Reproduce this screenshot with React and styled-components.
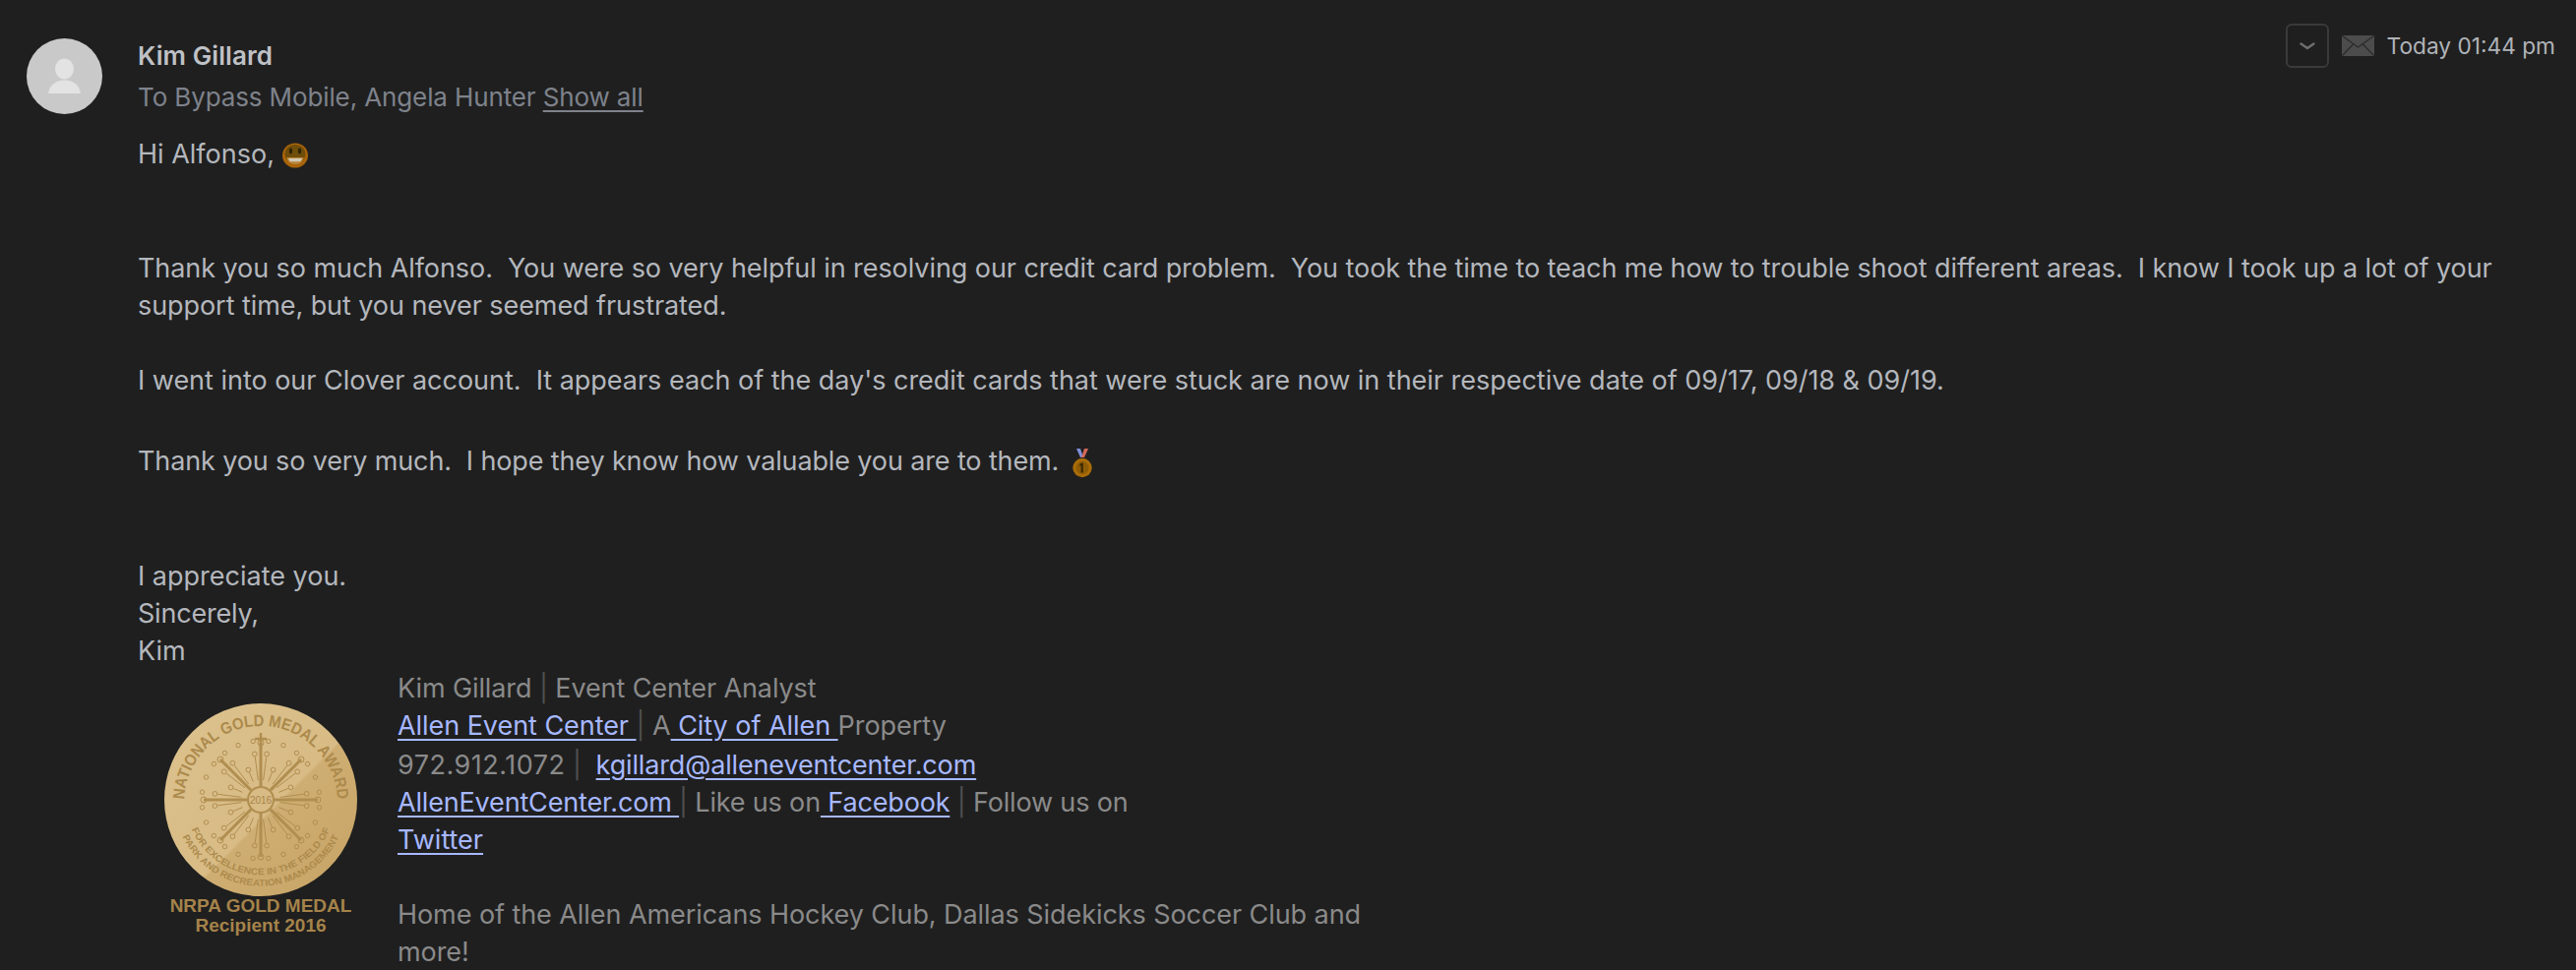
import styled, { createGlobalStyle } from "styled-components";

const GlobalStyle = createGlobalStyle`
  html, body {
    margin: 0;
    padding: 0;
    background: #1f1f1f;
  }
`;

const Page = styled.div`
  width: 2618px;
  height: 986px;
  overflow: hidden;
  display: flex;
  background: #1f1f1f;
  font-family: "Inter", "Liberation Sans", sans-serif;
  font-size: 27px;
  line-height: 38px;
  color: #b4b7bd;
`;

const Gutter = styled.div`
  flex: 0 0 140px;
  padding: 39px 0 0 27px;
  box-sizing: border-box;
`;

const Avatar = styled.div`
  width: 77px;
  height: 77px;
  border-radius: 50%;
  overflow: hidden;
  background: #c9c9c9;
  svg {
    display: block;
  }
`;

const Message = styled.div`
  flex: 1;
  min-width: 0;
  padding-right: 21px;
`;

const Header = styled.div`
  display: flex;
  justify-content: space-between;
  align-items: flex-start;
  height: 138px;
  padding-top: 38px;
  box-sizing: border-box;
`;

const Sender = styled.div`
  font-size: 26px;
  letter-spacing: 0.1px;
  font-weight: 600;
  color: #bfc1c6;
`;

const Recipients = styled.div`
  margin-top: 4px;
  font-size: 26px;
  letter-spacing: -0.12px;
  color: #7e828b;
  a {
    color: inherit;
    text-decoration: underline;
    text-underline-offset: 4px;
  }
`;

const Meta = styled.div`
  display: flex;
  align-items: center;
  margin-top: -14px;
  gap: 13px;
`;

const ToggleButton = styled.div`
  width: 44px;
  height: 45px;
  box-sizing: border-box;
  border: 2px solid #3a3a3a;
  border-radius: 6px;
  display: flex;
  align-items: center;
  justify-content: center;
`;

const Time = styled.span`
  font-size: 22.7px;
  color: #b0b3b8;
`;

const Line = styled.div`
  min-height: 38px;
  margin-top: ${(p) => p.$gap || 0}px;
  letter-spacing: ${(p) => p.$track || 0}px;
  svg {
    vertical-align: middle;
  }
`;

const Signature = styled.div`
  display: flex;
`;

const MedalCell = styled.div`
  flex: 0 0 264px;
  padding: 34px 0 0 25px;
  box-sizing: border-box;
  svg {
    display: block;
  }
`;

const SignatureText = styled.div`
  width: 1000px;
  color: #8a8a8a;
  a {
    color: #a7b8ff;
    text-decoration: underline;
    text-underline-offset: 4px;
  }
`;

const Separator = styled.span`
  color: #4e4e4e;
`;

const Phone = styled.span`
  letter-spacing: 0.5px;
`;

const GrinEmoji = () => (
  <svg width="26" height="26" viewBox="0 0 26 26" style={{ margin: "0 0 2px 0" }}>
    <ellipse cx="13" cy="13" rx="13" ry="12.6" fill="#a8640a" />
    <ellipse cx="13" cy="11.5" rx="10.5" ry="9.5" fill="#6f4e0a" />
    <ellipse cx="8.5" cy="8.500" rx="1.600" ry="3" fill="#2e2205" />
    <ellipse cx="17.500" cy="8.500" rx="1.600" ry="3" fill="#2e2205" />
    <path d="M4.500 15h17c-.6 4.500-4 7-8.500 7s-7.900-2.500-8.500-7z" fill="#b8853a" />
    <path d="M6 16h14c-.5 1.400-1 2.400-1.800 3.200H7.800C7 18.400 6.500 17.400 6 16z" fill="#d0c8b4" />
  </svg>
);

const MedalEmoji = () => (
  <svg width="20" height="30" viewBox="0 0 20 30" style={{ marginLeft: "6px" }}>
    <path d="M4 0h4l3 9H8z" fill="#7f8fd8" />
    <path d="M16 0h-4l-3 9h3z" fill="#d4685a" />
    <circle cx="10" cy="19.500" r="9.700" fill="#a86c08" />
    <circle cx="10" cy="19.500" r="6.500" fill="#8f5c06" />
    <path d="M10.800 14.500v10H8.600v-7.400l-1.400.8v-2l2-1.400z" fill="#3b2a05" />
  </svg>
);

const ChevronIcon = () => (
  <svg width="16" height="8" viewBox="0 0 16 8">
    <path d="M1.500 1.500 8 6l6.500-4.500" fill="none" stroke="#6e6e6e" strokeWidth="2.400" strokeLinecap="round" strokeLinejoin="round" />
  </svg>
);

const EnvelopeIcon = () => (
  <svg width="33" height="21" viewBox="0 0 33 21">
    <rect width="33" height="21" rx="1" fill="#4c4c4c" />
    <path d="M0.500 0.500 16.500 12 32.500 0.500M0.500 20.500 12 8.500M32.500 20.500 21 8.500" fill="none" stroke="#2a2a2a" strokeWidth="1.200" />
  </svg>
);

const PersonIcon = () => (
  <svg width="77" height="77" viewBox="0 0 77 77">
    <ellipse cx="38.500" cy="31" rx="9.500" ry="10.500" fill="#e3e3e3" />
    <path d="M22 56c1.500-9 8-13.500 16.500-13.500S53.500 47 55 56z" fill="#e3e3e3" />
  </svg>
);

const polar = (deg, r) => {
  const a = (deg * Math.PI) / 180;
  return { x: 100 + Math.cos(a) * r, y: 98 + Math.sin(a) * r };
};

// eight long spokes, with thin rays ending in small rings between them
const spokes = Array.from({ length: 8 }, (_, i) => {
  const deg = i * 45;
  return { from: polar(deg, 14), to: polar(deg, 58) };
});

const thinRays = Array.from({ length: 24 }, (_, i) => {
  const deg = i * 15 + 7.5;
  const len = i % 3 === 1 ? 30 : 44;
  return { from: polar(deg, 20), to: polar(deg, len), ring: polar(deg, len + 3) };
});

const outerRings = Array.from({ length: 24 }, (_, i) => polar(i * 15 + 7.5, 60));

const GoldMedal = () => (
  <svg width="200" height="240" viewBox="0 0 200 240">
    <defs>
      <linearGradient id="gold" x1="0" y1="0" x2="1" y2="1">
        <stop offset="0" stopColor="#dcc28e" />
        <stop offset="0.55" stopColor="#d8bb85" />
        <stop offset="0.56" stopColor="#cfae73" />
        <stop offset="1" stopColor="#c6a263" />
      </linearGradient>
      <path id="topArc" d="M22 101a78 78 0 0 1 156 0" />
      <path id="lowArcA" d="M29 126a76.300 76.300 0 0 0 142 0" />
      <path id="lowArcB" d="M20 134a87.700 87.700 0 0 0 160 0" />
    </defs>
    <circle cx="100" cy="98" r="98" fill="url(#gold)" />
    <g stroke="#b08e50" fill="none">
      {thinRays.map((r, i) => (
        <g key={i}>
          <line x1={r.from.x} y1={r.from.y} x2={r.to.x} y2={r.to.y} strokeWidth="1" />
          <circle cx={r.ring.x} cy={r.ring.y} r="2.400" />
        </g>
      ))}
      {outerRings.map((d, i) => (
        <circle key={i} cx={d.x} cy={d.y} r="2.200" />
      ))}
      {spokes.map((s, i) => (
        <g key={i}>
          <line x1={s.from.x} y1={s.from.y} x2={s.to.x} y2={s.to.y} strokeWidth="3" />
          <circle cx={s.to.x} cy={s.to.y} r="3" />
        </g>
      ))}
      <path d="M100 30v16M94 36h12" strokeWidth="2.500" />
      <circle cx="100" cy="98" r="13" fill="#d8bb85" strokeWidth="2" />
    </g>
    <text x="100" y="102" textAnchor="middle" fontFamily="Liberation Sans" fontSize="10" fill="#a8854a">2016</text>
    <g fontFamily="Liberation Sans" fontWeight="700" fill="#ac8a4c">
      <text fontSize="16.500">
        <textPath href="#topArc" startOffset="50%" textAnchor="middle" textLength="238" lengthAdjust="spacingAndGlyphs">NATIONAL GOLD MEDAL AWARD</textPath>
      </text>
      <text fontSize="9.500">
        <textPath href="#lowArcA" startOffset="50%" textAnchor="middle" textLength="178" lengthAdjust="spacingAndGlyphs">FOR EXCELLENCE IN THE FIELD OF</textPath>
      </text>
      <text fontSize="9.500">
        <textPath href="#lowArcB" startOffset="50%" textAnchor="middle" textLength="198" lengthAdjust="spacingAndGlyphs">PARK AND RECREATION MANAGEMENT</textPath>
      </text>
    </g>
    <g fontFamily="Liberation Sans" fontWeight="700" fontSize="19" fill="#a5834a" textAnchor="middle">
      <text x="100" y="212">NRPA GOLD MEDAL</text>
      <text x="100" y="232">Recipient 2016</text>
    </g>
  </svg>
);

const App = () => (
  <>
    <GlobalStyle />
    <Page>
      <Gutter>
        <Avatar>
          <PersonIcon />
        </Avatar>
      </Gutter>
      <Message>
        <Header>
          <div>
            <Sender>Kim Gillard</Sender>
            <Recipients>
              To Bypass Mobile, Angela Hunter <a href="#all">Show all</a>
            </Recipients>
          </div>
          <Meta>
            <ToggleButton>
              <ChevronIcon />
            </ToggleButton>
            <EnvelopeIcon />
            <Time>Today 01:44 pm</Time>
          </Meta>
        </Header>
        <Line>
          Hi Alfonso, <GrinEmoji />
        </Line>
        <Line $gap={78} $track={-0.07}>
          Thank you so much Alfonso.&nbsp; You were so very helpful in resolving our credit card problem.&nbsp; You took the time to teach me how to trouble shoot different areas.&nbsp; I know I took up a lot of your support time, but you never seemed frustrated.
        </Line>
        <Line $gap={38} $track={-0.02}>
          I went into our Clover account.&nbsp; It appears each of the day's credit cards that were stuck are now in their respective date of 09/17, 09/18 &amp; 09/19.
        </Line>
        <Line $gap={44} $track={-0.13}>
          Thank you so very much.&nbsp; I hope they know how valuable you are to them. <MedalEmoji />
        </Line>
        <Line $gap={79}>I appreciate you.</Line>
        <Line $track={-0.2}>Sincerely,</Line>
        <Line>Kim</Line>
        <Signature>
          <MedalCell>
            <GoldMedal />
          </MedalCell>
          <SignatureText>
            <Line $track={-0.1}>
              Kim Gillard <Separator>|</Separator> Event Center Analyst
            </Line>
            <Line $track={-0.05}>
              <a href="#aec">Allen Event Center </a><Separator>|</Separator> A<a href="#coa"> City of Allen </a>Property
            </Line>
            <Line $gap={2} $track={-0.15}>
              <Phone>972.912.1072</Phone> <Separator>|</Separator>&nbsp; <a href="#mail">kgillard@alleneventcenter.com</a>
            </Line>
            <Line $track={-0.17}>
              <a href="#site">AllenEventCenter.com </a><Separator>|</Separator> Like us on<a href="#fb"> Facebook</a> <Separator>|</Separator> Follow us on
            </Line>
            <Line>
              <a href="#tw">Twitter</a>
            </Line>
            <Line $gap={38} $track={-0.07}>
              Home of the Allen Americans Hockey Club, Dallas Sidekicks Soccer Club and more!
            </Line>
          </SignatureText>
        </Signature>
      </Message>
    </Page>
  </>
);

export default App;
